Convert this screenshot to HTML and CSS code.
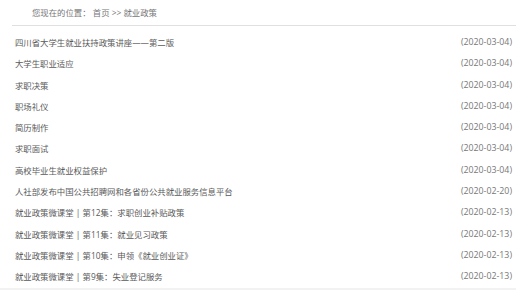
FILE: index.html
```html
<!DOCTYPE html>
<html lang="zh-CN">
<head>
  <meta charset="UTF-8">
  <title>就业政策</title>
  <link rel="stylesheet" href="styles.css">
</head>
<body>
  <div class="crumb">您现在的位置：&nbsp;首页 &gt;&gt; 就业政策</div>
  <ul class="news-list">
    <li><a href="#">四川省大学生就业扶持政策讲座——第二版</a><span>(2020-03-04)</span></li>
    <li><a href="#">大学生职业适应</a><span>(2020-03-04)</span></li>
    <li><a href="#">求职决策</a><span>(2020-03-04)</span></li>
    <li><a href="#">职场礼仪</a><span>(2020-03-04)</span></li>
    <li><a href="#">简历制作</a><span>(2020-03-04)</span></li>
    <li><a href="#">求职面试</a><span>(2020-03-04)</span></li>
    <li><a href="#">高校毕业生就业权益保护</a><span>(2020-03-04)</span></li>
    <li><a href="#">人社部发布中国公共招聘网和各省份公共就业服务信息平台</a><span>(2020-02-20)</span></li>
    <li><a href="#">就业政策微课堂 | 第12集：求职创业补贴政策</a><span>(2020-02-13)</span></li>
    <li><a href="#">就业政策微课堂 | 第11集：就业见习政策</a><span>(2020-02-13)</span></li>
    <li><a href="#">就业政策微课堂 | 第10集：申领《就业创业证》</a><span>(2020-02-13)</span></li>
    <li><a href="#">就业政策微课堂 | 第9集：失业登记服务</a><span>(2020-02-13)</span></li>
  </ul>
</body>
</html>
```

FILE: styles.css
```css
body {
  margin: 0;
  font-family: "Open Sans", "Noto Sans CJK SC", sans-serif;
  font-size: 8.4px;
  color: #666;
  background: #fff;
}
.crumb {
  height: 25px;
  line-height: 25px;
  margin-left: 12px;
  padding-left: 20px;
  border-bottom: 1px solid #e0e0e0;
  color: #777;
}
.news-list {
  list-style: none;
  margin: 6px 0 0;
  padding: 0;
  border-bottom: 2px solid #f2f2f2;
}
.news-list li {
  display: flex;
  justify-content: space-between;
  height: 21.3px;
  line-height: 21.3px;
  padding: 0 4px 0 15px;
}
.news-list a {
  color: #5a5a5a;
  text-decoration: none;
}
.news-list span {
  font-size: 8.8px;
  color: #777;
}
```
